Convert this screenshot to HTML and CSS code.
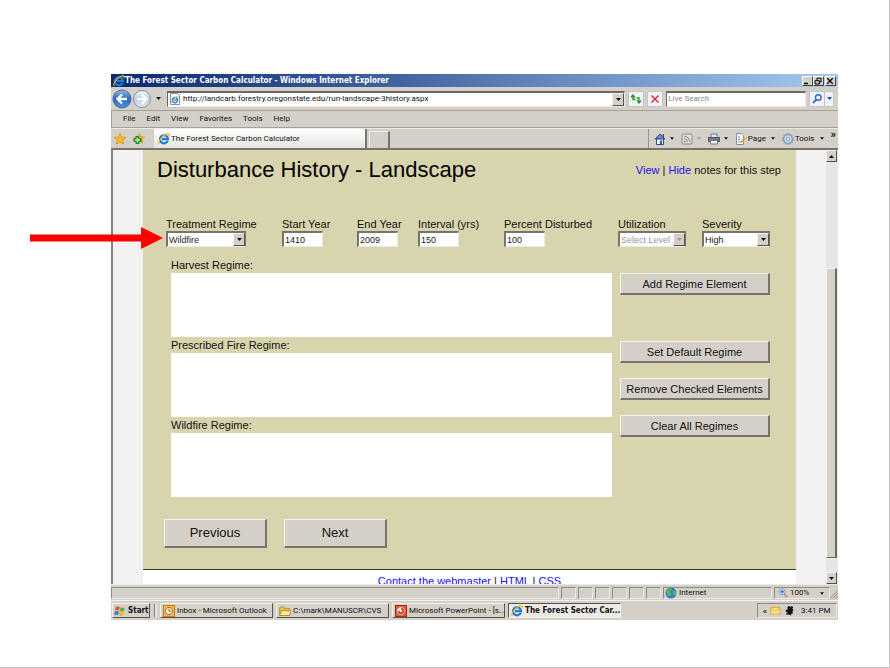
FILE: index.html
```html
<!DOCTYPE html>
<html lang="en">
<head>
<meta charset="utf-8">
<title>The Forest Sector Carbon Calculator</title>
<link rel="stylesheet" href="styles.css">
</head>
<body>
<svg class="defs" aria-hidden="true">
  <defs>
    <linearGradient id="blue" x1="0" y1="0" x2="0" y2="1"><stop offset="0" stop-color="#8fbcf0"/><stop offset=".5" stop-color="#2a68c4"/><stop offset="1" stop-color="#3f9ae8"/></linearGradient>
    <linearGradient id="pale" x1="0" y1="0" x2="0" y2="1"><stop offset="0" stop-color="#f4f8fc"/><stop offset=".5" stop-color="#b8cce0"/><stop offset="1" stop-color="#e4eef8"/></linearGradient>
    <symbol id="ie" viewBox="0 0 12 12">
      <path d="M9.700 7.800A4 4 0 1 1 10 6.200H4" fill="none" stroke="#1d7ad6" stroke-width="2.200"/>
      <path d="M1.200 11C-.8 8 6.500.2 10.600.9c1 .3.900 1.300.4 2.300" fill="none" stroke="#f2b21c" stroke-width="1.200"/>
    </symbol>
    <symbol id="caret" viewBox="0 0 5 3"><path d="M0 0h5L2.500 3z" fill="currentColor"/></symbol>
    <symbol id="star" viewBox="0 0 12 12"><path d="M6 .6l1.600 3.500 3.900.4-2.900 2.600.9 3.900L6 9.100 2.500 11l.9-3.900L.5 4.500l3.900-.4z" fill="#fdbf2d" stroke="#d98a12" stroke-width=".8"/></symbol>
  </defs>
</svg>
<div class="slide">
  <div class="window">
    <header class="titlebar">
      <svg class="icon"><use href="#ie"/></svg>
      <span class="title">The Forest Sector Carbon Calculator - Windows Internet Explorer</span>
      <button class="winbtn" aria-label="Minimize"><svg viewBox="0 0 8 8"><path d="M1 6.500h4" stroke="#000" stroke-width="1.500"/></svg></button>
      <button class="winbtn" aria-label="Restore"><svg viewBox="0 0 8 8"><path d="M3 3V1.200h4V5H5.500M1 3.700h4.300V7H1z" fill="none" stroke="#000"/></svg></button>
      <button class="winbtn close" aria-label="Close"><svg viewBox="0 0 8 8"><path d="M1.300 1.300l5.400 5.400M6.700 1.300L1.300 6.700" stroke="#000" stroke-width="1.300"/></svg></button>
    </header>

    <div class="addressbar">
      <button class="nav" aria-label="Back"><svg viewBox="0 0 20 20"><circle cx="10" cy="10" r="9" fill="url(#blue)" stroke="#4b6a94"/><path d="M15 10H6M10 5.500L5.500 10l4.500 4.500" fill="none" stroke="#fff" stroke-width="2.400"/></svg></button>
      <button class="nav" aria-label="Forward"><svg viewBox="0 0 20 20"><circle cx="10" cy="10" r="8.500" fill="url(#pale)" stroke="#8794a4"/><path d="M5 10h9M10 5.500l4.500 4.500-4.500 4.500" fill="none" stroke="#fff" stroke-width="2.400"/></svg></button>
      <svg class="caret history"><use href="#caret"/></svg>
      <div class="sunken url">
        <svg class="icon pageicon" viewBox="0 0 12 12"><path d="M1.500.5h7l2 2v9h-9z" fill="#fff" stroke="#8090a8"/><use href="#ie" x="2" y="3" width="8" height="8"/></svg>
        <input aria-label="Address" value="http://landcarb.forestry.oregonstate.edu/run-landscape-3history.aspx">
        <button class="raised drop" aria-label="Show addresses"><svg class="caret"><use href="#caret"/></svg></button>
      </div>
      <button class="tool" aria-label="Refresh"><svg viewBox="0 0 14 14"><path d="M6.500 7.500H4V4M2 5.500L4 3l2 2.500M7.500 6h2.500v4M8 8.500l2 2.500 2-2.500" fill="none" stroke="#2c9a2c" stroke-width="1.400"/></svg></button>
      <button class="tool" aria-label="Stop"><svg viewBox="0 0 14 14"><path d="M3.500 3.500l7 7M10.500 3.500l-7 7" stroke="#d8242c" stroke-width="1.400"/></svg></button>
      <div class="sunken search"><input aria-label="Search" placeholder="Live Search"></div>
      <button class="tool go" aria-label="Search the web"><svg viewBox="0 0 14 14"><circle cx="8.300" cy="5.500" r="2.800" fill="#fff" stroke="#2a62d8" stroke-width="1.400"/><path d="M6.200 7.600L3 11" stroke="#2a62d8" stroke-width="1.800"/></svg></button>
      <button class="tool more" aria-label="Search options"><svg class="caret"><use href="#caret"/></svg></button>
    </div>

    <nav class="menubar">
      <a href="#">File</a><a href="#">Edit</a><a href="#">View</a><a href="#">Favorites</a><a href="#">Tools</a><a href="#">Help</a>
    </nav>

    <div class="tabbar">
      <button class="plain fav" aria-label="Favorites"><svg class="icon"><use href="#star"/></svg></button>
      <button class="plain fav" aria-label="Add to favorites"><svg class="icon" viewBox="0 0 12 12"><use href="#star" x="1" y="0" width="11" height="11"/><path d="M4.500 3v8M.5 7h8" stroke="#238a23" stroke-width="3.800"/><path d="M4.500 4.500v5M2 7h5" stroke="#b8ecab" stroke-width="1.600"/></svg></button>
      <button class="tab"><svg class="icon"><use href="#ie"/></svg>The Forest Sector Carbon Calculator</button>
      <button class="newtab" aria-label="New tab"></button>
      <div class="commands">
        <button class="plain" aria-label="Home"><svg class="icon" viewBox="0 0 12 12"><path d="M1 6l5-5 5 5z" fill="#6d8cc8" stroke="#2b4b91"/><path d="M8.500 1h1.500v3H8.500z" fill="#a33"/><path d="M2.500 6h7v5.500h-7z" fill="#f4f6fb" stroke="#2b4b91"/><path d="M6 7.500h2v4H6z" fill="#345a9e"/></svg><svg class="caret"><use href="#caret"/></svg></button>
        <button class="plain off" aria-label="Feeds"><svg class="icon" viewBox="0 0 12 12"><rect x="1" y="1" width="10" height="10" rx="1" fill="#e0dedb" stroke="#8c8c8c"/><path d="M3 3.200a6 6 0 0 1 6 6M3 5.700a3.500 3.500 0 0 1 3.500 3.500" fill="none" stroke="#888"/><circle cx="3.600" cy="8.700" r=".9" fill="#888"/></svg><svg class="caret"><use href="#caret"/></svg></button>
        <button class="plain" aria-label="Print"><svg class="icon" viewBox="0 0 12 12"><path d="M3 1h6v4H3z" fill="#dfe9f8" stroke="#6b7b98"/><path d="M.5 4.500h11v4H.5z" fill="#777d86" stroke="#50555c"/><path d="M2.500 7.500h7v3.500h-7z" fill="#f4f4f4" stroke="#777"/></svg><svg class="caret"><use href="#caret"/></svg></button>
        <button class="plain"><svg class="icon" viewBox="0 0 12 12"><path d="M1.500.5h5l2 2v9h-7z" fill="#fff" stroke="#8090a8"/><path d="M3 4h2M3 6.500h2M3 9h2" stroke="#5888c8"/><path d="M5.500 9.500l5-5" stroke="#e8a830" stroke-width="2"/></svg>Page<svg class="caret"><use href="#caret"/></svg></button>
        <button class="plain"><svg class="icon" viewBox="0 0 12 12"><circle cx="6" cy="6" r="4.300" fill="#cfe2f3" stroke="#6f94b8" stroke-width="1.200"/><circle cx="6" cy="6" r="5.400" fill="none" stroke="#6f94b8" stroke-dasharray="1.600 1.200"/><circle cx="6" cy="6" r="1.800" fill="#f8fbff" stroke="#6f94b8"/></svg>Tools<svg class="caret"><use href="#caret"/></svg></button>
        <button class="plain chevron" aria-label="More commands">»</button>
      </div>
    </div>

    <div class="viewport">
      <div class="page">
        <main class="panel">
          <div class="heading">
            <h1>Disturbance History - Landscape</h1>
            <p><a href="#">View</a> | <a href="#">Hide</a> notes for this step</p>
          </div>
          <form class="regime">
            <div class="fields">
              <div><label for="treatment">Treatment Regime</label><span class="pick treat"><select id="treatment"><option>Wildfire</option></select><i class="raised"><svg class="caret"><use href="#caret"/></svg></i></span></div>
              <div><label for="start">Start Year</label><input id="start" value="1410"></div>
              <div><label for="end">End Year</label><input id="end" value="2009"></div>
              <div><label for="interval">Interval (yrs)</label><input id="interval" value="150"></div>
              <div><label for="percent">Percent Disturbed</label><input id="percent" value="100"></div>
              <div><label for="utilization">Utilization</label><span class="pick"><select id="utilization" disabled><option>Select Level</option></select><i class="raised off"><svg class="caret"><use href="#caret"/></svg></i></span></div>
              <div><label for="severity">Severity</label><span class="pick"><select id="severity"><option>High</option></select><i class="raised"><svg class="caret"><use href="#caret"/></svg></i></span></div>
            </div>
            <div class="columns">
              <div class="lists">
                <h2>Harvest Regime:</h2><div class="list"></div>
                <h2>Prescribed Fire Regime:</h2><div class="list"></div>
                <h2>Wildfire Regime:</h2><div class="list"></div>
              </div>
              <div class="actions">
                <button type="button" class="btn add">Add Regime Element</button>
                <button type="button" class="btn">Set Default Regime</button>
                <button type="button" class="btn">Remove Checked Elements</button>
                <button type="button" class="btn">Clear All Regimes</button>
              </div>
            </div>
            <div class="steps">
              <button type="button" class="btn">Previous</button>
              <button type="button" class="btn">Next</button>
            </div>
          </form>
        </main>
        <footer><a href="#">Contact the webmaster</a> | <a href="#">HTML</a> | <a href="#">CSS</a></footer>
      </div>
      <div class="scrollbar">
        <button class="raised" aria-label="Scroll up"><svg class="caret up"><use href="#caret"/></svg></button>
        <div class="track"><div class="thumb"></div></div>
        <button class="raised" aria-label="Scroll down"><svg class="caret"><use href="#caret"/></svg></button>
      </div>
    </div>

    <div class="statusbar">
      <span class="cell message"></span><span class="cell"></span><span class="cell"></span><span class="cell"></span><span class="cell"></span><span class="cell"></span><span class="cell"></span>
      <span class="cell zone"><svg class="icon" viewBox="0 0 12 12"><circle cx="6" cy="6" r="5.500" fill="#3378d8"/><path d="M2 3c2-2.500 5-2 5-1S5.500 4 5 5s2 1 1.500 2.500S4 10 3 8.500 1 4.500 2 3zM8 4c1-1 3 0 3 2S9 9.500 8.500 8 7 5 8 4z" fill="#58bd4a"/></svg>Internet</span>
      <span class="cell zoom"><svg class="icon" viewBox="0 0 12 12"><path d="M7 7l4 4" stroke="#c98b3c" stroke-width="2"/><circle cx="5" cy="4.500" r="3.500" fill="#e8f2ff" stroke="#5d8fd8"/><path d="M5 2.500v4M3 4.500h4" stroke="#1b50c8" stroke-width="1.400"/></svg>100%<svg class="caret"><use href="#caret"/></svg></span>
      <svg class="grip" viewBox="0 0 10 10"><path d="M1 10l9-9M4 10l6-6M7 10l3-3" stroke="#8a8783"/></svg>
    </div>

    <div class="taskbar">
      <button class="task start"><svg class="icon" viewBox="0 0 12 12"><path d="M1.800 2q2-1.200 3.900 0L5 5.600q-2-1-4 0z" fill="#e8502a"/><path d="M6.500 2.300q2 1.200 4.300 0L10 6q-2 1-4.200 0z" fill="#62b33a"/><path d="M.9 6.400q2-1 4 0l-.8 3.800q-2-1.200-4 0z" fill="#3977d8"/><path d="M5.600 6.800q2 1 4.300 0l-.8 3.700q-2 1.200-4.300 0z" fill="#f5bb24"/></svg>Start</button>
      <span class="divider"></span>
      <button class="task"><svg class="icon" viewBox="0 0 12 12"><rect x=".5" y=".5" width="11" height="11" fill="#f5b84c" stroke="#c77a20"/><circle cx="6" cy="6" r="3.600" fill="#fff8e0" stroke="#b86c18"/><path d="M6 3.800V6.200h2" fill="none" stroke="#944c10"/></svg>Inbox - Microsoft Outlook</button>
      <button class="task"><svg class="icon" viewBox="0 0 12 12"><path d="M.7 3V10.500h10V3.500H5.500L4.500 2H1.500z" fill="#f0c248" stroke="#a8842a" stroke-width=".8"/><path d="M.7 10.500L2.500 5.500h9L10.700 10.500z" fill="#fde999" stroke="#a8842a" stroke-width=".8"/></svg>C:\mark\MANUSCR\CVS</button>
      <button class="task"><svg class="icon" viewBox="0 0 12 12"><rect x=".5" y=".5" width="11" height="11" fill="#e0593a" stroke="#a03018"/><circle cx="6" cy="6" r="3.700" fill="#fff"/><path d="M6 6V2.800A3.200 3.200 0 1 1 2.800 6z" fill="#d24726"/><circle cx="6" cy="6" r="1.200" fill="#fff"/></svg>Microsoft PowerPoint - [s...</button>
      <button class="task active"><svg class="icon"><use href="#ie"/></svg>The Forest Sector Car...</button>
      <div class="tray"><b>«</b><svg class="icon" viewBox="0 0 12 12"><path d="M1 2.500h10v7.500H1z" fill="#ffe890" stroke="#d6a22c"/><path d="M1 3l5 4 5-4" fill="none" stroke="#d6a22c"/></svg><svg class="icon" viewBox="0 0 12 12"><path d="M5 1l2 1 2-1 1 2-1 1 1.500 1.500L9 7l1 2-2 .500-.500 2L5 10 3 11 2.500 9 4 8 1.500 7l1-2L4.500 5 3.500 3z" fill="#111"/></svg><time>3:41 PM</time></div>
    </div>
  </div>
  <svg class="pointer" viewBox="0 0 133 22" aria-hidden="true"><path d="M0 7.500h111V0l22 11-22 11v-7.500H0z" fill="#f00"/></svg>
</div>
</body>
</html>
```
FILE: styles.css
```css
* { box-sizing: border-box; }

body {
  margin: 0;
  background: #fff;
  color: #111;
  font: 11px/14px "Liberation Sans", Arial, sans-serif;
}

button, input, select { font: inherit; color: inherit; }
button { padding: 0; margin: 0; border: 0; background: none; white-space: nowrap; }
h1, h2, p { margin: 0; font-weight: normal; }
a { color: #1a10f0; text-decoration: none; }

.defs { position: absolute; width: 0; height: 0; }

.slide {
  position: relative;
  min-height: 100vh;
  padding: 74px 51px 47px 111px;
  border-right: 1px solid #c4c4c4;
  border-bottom: 1px solid #c4c4c4;
}

.pointer { position: absolute; left: 30px; top: 227px; width: 133px; height: 22px; }

.window {
  background: #d4d0c8;
  font: 8px/12px Roboto, "Noto Sans", sans-serif;
}

.icon { width: 12px; height: 12px; flex: none; }
.caret { width: 5px; height: 3px; flex: none; display: block; }
.caret.up { transform: rotate(180deg); }
.off { color: #99968f; }

.raised {
  display: flex;
  align-items: center;
  justify-content: center;
  background: #d4d0c8;
  border: 1px solid;
  border-color: #f4f2ee #55534f #55534f #f4f2ee;
}
.sunken {
  background: #fff;
  border: 1px solid;
  border-color: #6c6a66 #eceae6 #eceae6 #6c6a66;
  border-top-width: 2px;
}

/* Title bar */
.titlebar {
  display: flex;
  align-items: center;
  height: 13px;
  padding: 0 2px;
  background: linear-gradient(90deg, #0b2870, #4265a2 40%, #7598ca 70%, #a5c9ef);
  color: #fff;
  font: bold 8px/12px "DejaVu Sans Condensed", "DejaVu Sans", sans-serif;
}
.title { flex: 1; white-space: nowrap; }
.winbtn {
  width: 11px;
  height: 10px;
  background: #d4d0c8;
  border: 1px solid;
  border-color: #fff #444 #444 #fff;
}
.winbtn svg { display: block; width: 8px; height: 8px; }
.winbtn.close { margin-left: 1px; }

/* Address bar */
.addressbar {
  display: flex;
  align-items: center;
  gap: 3px;
  height: 24px;
  padding: 0 4px 0 1px;
  border-bottom: 1px solid #a4a19b;
}
.nav, .nav svg { display: block; width: 20px; height: 20px; }
.nav + .nav { margin-left: -3px; }
.history { margin: 0 3px 0 1px; }
.url, .search { display: flex; align-items: center; height: 16px; }
.url { flex: 459; padding-left: 1px; }
.url .icon { margin-right: 2px; }
.search { flex: 138; padding-left: 1px; }
.sunken input { flex: 1; min-width: 0; padding: 0; border: 0; outline: 0; background: none; }
.sunken input::placeholder { color: #888; opacity: 1; }
.drop { width: 12px; height: 13px; }
.tool {
  display: flex;
  align-items: center;
  justify-content: center;
  width: 16px;
  height: 16px;
  background: #f1f2f5;
  border: 1px solid #c3c5cd;
}
.tool svg { flex: none; width: 14px; height: 14px; }
.tool .caret { width: 5px; height: 3px; color: #1c52c8; }
.more { width: 10px; margin-left: -4px; }

/* Menu bar */
.menubar {
  display: flex;
  align-items: center;
  gap: 11px;
  height: 17px;
  padding-left: 11px;
  border-left: 1px solid #a4a19b;
  border-bottom: 1px solid #a4a19b;
}
.menubar a { color: #111; }

/* Tab bar */
.tabbar {
  display: flex;
  align-items: flex-end;
  height: 22px;
  padding-left: 3px;
  border-top: 1px solid #eceae6;
  border-bottom: 2px solid #77746f;
}
.plain { display: flex; align-items: center; gap: 2px; height: 19px; }
.fav { width: 19px; }
.tab {
  display: flex;
  align-items: center;
  gap: 1px;
  width: 213px;
  height: 19px;
  margin-left: 2px;
  padding-left: 4px;
  background: linear-gradient(#fff, #e6e4e0);
  border-right: 2px solid #77746f;
}
.newtab {
  width: 21px;
  height: 17px;
  margin-left: 2px;
  border-top: 1px solid #f0eeea;
  border-left: 1px solid #f0eeea;
  border-right: 2px solid #77746f;
}
.commands {
  display: flex;
  gap: 7px;
  margin-left: auto;
  padding-left: 5px;
  border-left: 1px solid #98958f;
}
.commands .icon { margin-right: -1px; }
.commands .caret { width: 4px; margin-left: 3px; }
.chevron { align-items: flex-start; padding-right: 2px; font-weight: bold; font-size: 11px; }

/* Page */
.viewport { display: flex; height: 434px; border-left: 2px solid #84827e; }
.page {
  flex: 1;
  display: flex;
  flex-direction: column;
  min-width: 0;
  padding: 0 30px;
  overflow: hidden;
  background: #f2f2f2;
  color: #111;
  font: 11px/14px "Liberation Sans", Arial, sans-serif;
}
.panel { flex: none; background: #d8d5ae; border-bottom: 1px solid #3a3930; }
.heading {
  display: flex;
  justify-content: space-between;
  align-items: center;
  padding: 6px 15px 0 14px;
}
.heading h1 { color: #000; font-size: 22px; line-height: 28px; }
.fields {
  display: grid;
  grid-template-columns: 116fr 75fr 61fr 86fr 114fr 84fr 94fr;
  padding: 33px 0 0 23px;
}
.fields label { display: block; white-space: nowrap; }
.fields input, .fields select {
  display: block;
  height: 16px;
  margin: 0;
  padding: 0 1px;
  border: 1px solid;
  border-color: #77746f #eceae6 #eceae6 #77746f;
  border-top-width: 2px;
  border-left-width: 2px;
  border-radius: 0;
  background: #fff;
  color: #222;
  font-size: 9px;
  line-height: 12px;
}
.fields input { width: 41px; }
.pick { position: relative; display: block; width: 68px; }
.pick.treat { width: 80px; }
.fields select { width: 100%; appearance: none; border-right-color: #77746f; }
.fields select:disabled { color: #999; opacity: 1; }
.pick i { position: absolute; top: 2px; right: 1px; width: 12px; height: 13px; }

.columns {
  display: flex;
  justify-content: space-between;
  gap: 8px;
  padding: 10px 26px 0 28px;
}
.lists { flex: 1; }
.lists h2 { font-size: 11px; line-height: 16px; }
.list { height: 64px; background: #fff; }
.actions { display: flex; flex-direction: column; gap: 15px; width: 150px; padding-top: 16px; }
.btn {
  height: 22px;
  background: #d4d0c8;
  border: 1px solid;
  border-color: #f4f2ee #77746f #77746f #f4f2ee;
  border-right-width: 2px;
  border-bottom-width: 2px;
}
.add { margin-bottom: 31px; }
.steps { display: flex; gap: 17px; padding: 22px 21px 21px; }
.steps .btn { width: 103px; height: 29px; font-size: 13px; }

footer { flex: 1; padding-top: 4px; background: #fff; text-align: center; }

.scrollbar { display: flex; flex-direction: column; width: 12px; padding-right: 1px; background: #e8e6e2; }
.scrollbar button { width: 11px; height: 12px; }
.track { flex: 1; padding: 106px 0 14px; }
.thumb {
  height: 100%;
  background: #d4d0c8;
  border: 1px solid #f4f2ee;
  border-right: 2px solid #6c6a66;
  border-bottom: 1px solid #6c6a66;
}

/* Status bar */
.statusbar { display: flex; gap: 2px; height: 16px; padding: 2px 0 1px; border-top: 1px solid #eceae6; }
.cell {
  display: flex;
  align-items: center;
  gap: 2px;
  width: 15px;
  border: 1px solid;
  border-color: #8f8c87 #eceae6 #eceae6 #8f8c87;
}
.message { flex: 1; }
.zone { width: 109px; padding-left: 1px; }
.zoom { width: 56px; padding-left: 3px; }
.zoom .icon { width: 10px; height: 10px; }
.zoom .caret { width: 4px; margin-left: 9px; }
.grip { width: 9px; height: 10px; align-self: flex-end; margin-left: -3px; }

/* Taskbar */
.taskbar { display: flex; gap: 3px; height: 20px; padding: 2px 1px; border-top: 1px solid #f4f2ee; }
.task {
  display: flex;
  align-items: center;
  gap: 2px;
  width: 113px;
  padding: 0 2px;
  border: 1px solid;
  border-color: #f4f2ee #55534f #55534f #f4f2ee;
}
.start, .active { font: bold 8px/12px "DejaVu Sans Condensed", "DejaVu Sans", sans-serif; }
.start { width: 38px; padding: 0 1px; }
.active { background: #eceae6; border-color: #55534f #f4f2ee #f4f2ee #55534f; }
.divider { width: 3px; margin: 1px 0 1px 1px; border-left: 1px solid #8f8c87; border-right: 1px solid #f4f2ee; }
.tray {
  display: flex;
  align-items: center;
  gap: 3px;
  width: 80px;
  margin-left: auto;
  padding-left: 5px;
  border: 1px solid;
  border-color: #8f8c87 #eceae6 #eceae6 #8f8c87;
}
.tray .icon { width: 11px; height: 11px; }
.tray time { margin-left: 3px; white-space: nowrap; }
```
